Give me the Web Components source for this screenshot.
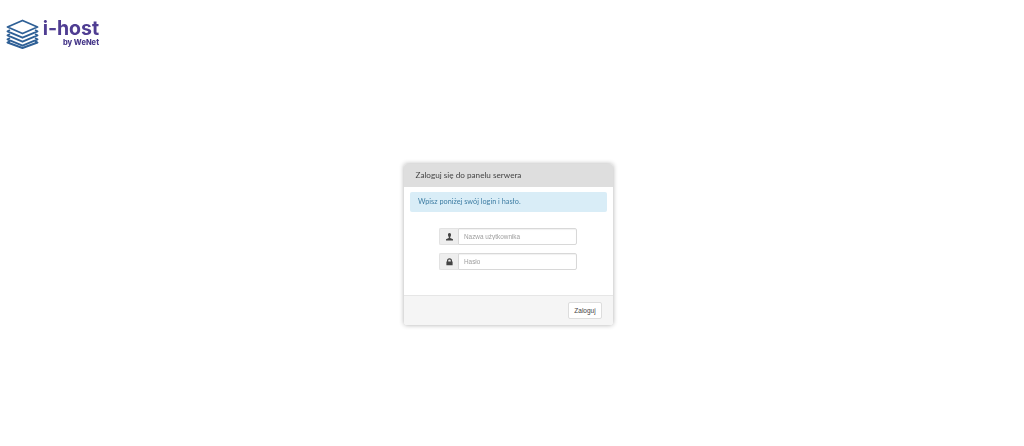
<!DOCTYPE html>
<html lang="pl"><head><meta charset="utf-8"><title>i-host</title>
<style>
html,body{margin:0;padding:0;background:#fff;height:446px;overflow:hidden}
body{font-family:"Open Sans","Liberation Sans",sans-serif}
</style></head><body>
<site-logo></site-logo>
<login-card title-text="Zaloguj się do panelu serwera" info="Wpisz poniżej swój login i hasło.">
  <input-row icon="user" placeholder="Nazwa użytkownika"></input-row>
  <input-row icon="lock" placeholder="Hasło"></input-row>
</login-card>
<script>
class SiteLogo extends HTMLElement{constructor(){super();this.attachShadow({mode:'open'}).innerHTML=`
<style>
:host{display:flex;align-items:flex-start;gap:4px;padding:19px 0 0 6px;height:30px;box-sizing:content-box;width:100px;filter:blur(.3px)}
svg{display:block}
.t{display:flex;flex-direction:column;align-items:flex-end;width:56px;color:#4f3d92;font-family:Inter,"Liberation Sans",sans-serif;font-weight:700}
.a{font-size:19.500px;line-height:18px;white-space:nowrap;letter-spacing:-.05px}
.b{font-size:7.500px;line-height:9px;margin-top:1px;white-space:nowrap;color:#47388a;font-weight:800}
</style>
<svg width="33" height="30" viewBox="0 0 33 30" fill="none" stroke="#2f6096" stroke-width="1.900" stroke-linejoin="round">
<path d="M16.500 1.500 31.500 8 16.500 14.500 1.500 8Z"/>
<path d="M4 11.200 1.500 12.300 16.500 18.700 31.500 12.300 29 11.200"/>
<path d="M4 15.200 1.500 16.300 16.500 22.700 31.500 16.300 29 15.200"/>
<path d="M4 19.200 1.500 20.300 16.500 26.700 31.500 20.300 29 19.200"/>
<path d="M4 22 1.500 23.500 16.500 29 31.500 23.500 29 22"/>
</svg>
<div class="t"><div class="a">i-host</div><div class="b">by WeNet</div></div>`}}
customElements.define('site-logo',SiteLogo);

class LoginCard extends HTMLElement{constructor(){super();this.attachShadow({mode:'open'}).innerHTML=`
<style>
:host{display:block;box-sizing:border-box;width:209px;height:161px;margin:115px 0 0 404px;background:#fff;border-radius:3px;box-shadow:0 0 5px rgba(0,0,0,.33);overflow:hidden}
.card{display:flex;flex-direction:column;height:100%;filter:blur(.25px)}
header{height:23px;background:#dedede;display:flex;align-items:center;padding:0 0 0 11.500px;font:8.160px/1 Lato,"Open Sans",sans-serif;color:#444;white-space:nowrap}
.alert{margin:5px 6px 0 6px;height:20px;background:#d9edf7;border-radius:2px;color:#3d7da3;display:flex;align-items:center;padding-left:8px;font:7.300px/1 Lato,"Open Sans",sans-serif;white-space:nowrap}
.body{flex:1;display:flex;flex-direction:column;align-items:center;gap:8px;padding:16px 1px 0 0;box-sizing:border-box}
footer{height:30px;background:#f5f5f5;border-top:1px solid #e6e6e6;display:flex;align-items:center;justify-content:flex-end;padding-right:11px;box-sizing:border-box}
button{width:34px;height:17px;padding:0;border:1px solid #ddd;border-radius:2px;background:#fff;color:#444;font:6.500px "Liberation Sans",Arial,sans-serif}
</style>
<div class="card"><header id="h"></header><div class="alert" id="i"></div>
<div class="body"><slot></slot></div>
<footer><button>Zaloguj</button></footer></div>`;
}
connectedCallback(){this.shadowRoot.getElementById('h').textContent=this.getAttribute('title-text');this.shadowRoot.getElementById('i').textContent=this.getAttribute('info');}}
customElements.define('login-card',LoginCard);

const ICONS={user:'<path d="M4.500 1C3.400 1 2.900 1.900 3 3c0 .9.4 1.700.8 2.100V6L1 7.300V8.600h7V7.300L5.200 6v-.9C5.600 4.700 6 3.900 6 3 6.100 1.900 5.600 1 4.500 1Z"/>',lock:'<path fill-rule="evenodd" d="M2 4.500V3.800a2.500 2.500 0 0 1 5 0v.7h.6v3.800H1.400V4.500ZM3.200 4.500h2.600v-.7a1.300 1.300 0 0 0-2.600 0Z"/>'};
class InputRow extends HTMLElement{constructor(){super();this.attachShadow({mode:'open'})}
connectedCallback(){this.shadowRoot.innerHTML=`
<style>
:host{display:flex;width:138px;height:17px}
.ic{width:19px;box-sizing:border-box;background:#eee;border:1px solid #e2e2e2;border-right:0;border-radius:2px 0 0 2px;display:flex;align-items:center;justify-content:center}
input{flex:1;min-width:0;box-sizing:border-box;height:17px;border:1px solid #d8d8d8;border-radius:0 2px 2px 0;padding:0 5px;margin:0;font:6.400px "Liberation Sans",Arial,sans-serif;background:#fff;outline:0;box-shadow:inset 0 1px 1px rgba(0,0,0,.06)}
input::placeholder{color:#a0a0a0;opacity:1}
</style>
<div class="ic"><svg width="9" height="9" viewBox="0 0 9 9" fill="#444">${ICONS[this.getAttribute('icon')]}</svg></div>
<input placeholder="${this.getAttribute('placeholder')}">`;}}
customElements.define('input-row',InputRow);
</script>
</body></html>
